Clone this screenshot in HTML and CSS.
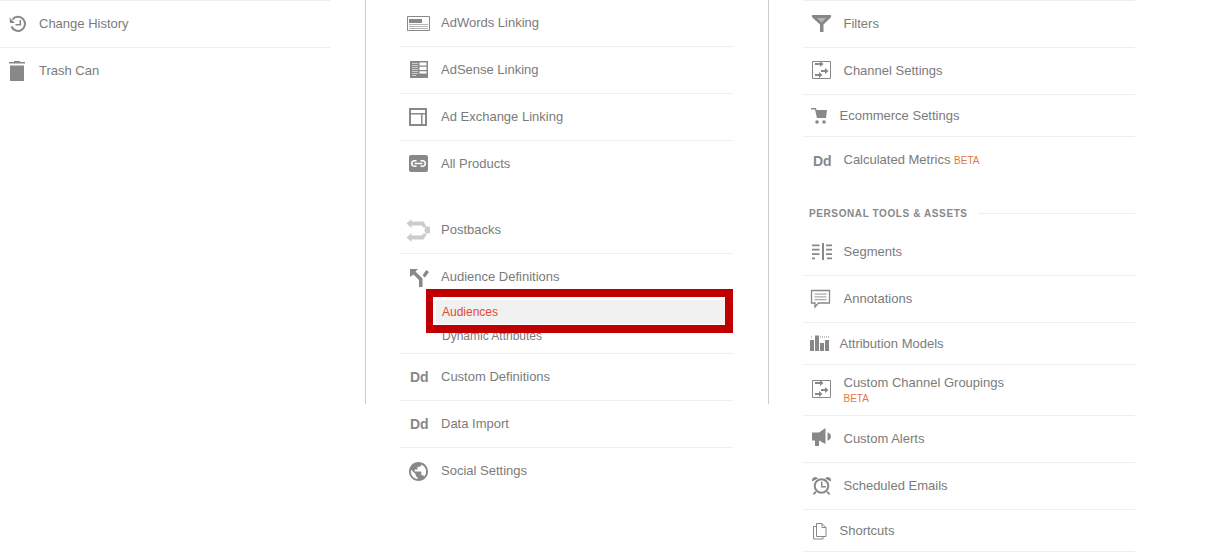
FILE: index.html
```html
<!DOCTYPE html>
<html lang="en">
<head>
<meta charset="utf-8">
<title>Admin</title>
<link rel="stylesheet" href="styles.css">
</head>
<body>
<div class="page">
  <ul class="col col-a topline">
    <li class="row"><span class="ico"><svg viewBox="0 0 24 24"><path class="line thick" d="M6.500 7.500A7 7 0 1 1 5.500 14.500"/><path d="M3.500 5.500l5.500 5.500H4zM13.500 8h1.600v5.500H9.500v-1.600h4z"/></svg></span>Change History</li>
    <li class="row last"><span class="ico"><svg viewBox="0 0 24 24"><path d="M8 2h6v1h5v1.600H3V3h5zM4 6.500h14V22H4z"/></svg></span>Trash Can</li>
  </ul>
  <div class="divider"></div>
  <div class="col col-b">
    <ul>
      <li class="row"><span class="ico"><svg viewBox="0 0 24 24"><path class="line" d="M1.500 5.500h22v14h-22z"/><path d="M3 8h13v4H3z"/><path class="soft" d="M3 13h19v1H3zM3 15h19v1H3zM3 17h19v1H3z"/></svg></span>AdWords Linking</li>
      <li class="row"><span class="ico"><svg viewBox="0 0 24 24"><path d="M4 3h18v17H4z"/><path class="stripe" d="M6 5h6v1H6zM6 7h6v1H6zM6 9h6v1H6zM6 11h6v1H6zM6 13h6v1H6zM6 15h6v1H6zM6 17h4v1H6z"/><path class="cut" d="M13.500 4.500H20.500V7.500H13.500zM13.500 8.800H20.500V12H13.500zM13.500 13.300H20.500V15.500H13.500z"/></svg></span>AdSense Linking</li>
      <li class="row"><span class="ico"><svg viewBox="0 0 24 24"><path d="M3 3h18v18H3zm2 2v3h14V5zm0 4.500V19h10V9.500zm11.500 0V19H19V9.500z" fill-rule="evenodd"/></svg></span>Ad Exchange Linking</li>
      <li class="row last"><span class="ico"><svg viewBox="0 0 24 24"><rect x="3" y="3" width="19" height="17" rx="2"/><path class="link" d="M10.500 8.700H8.500a2.800 2.800 0 0 0 0 5.600h2M14.500 8.700h2a2.800 2.800 0 0 1 0 5.600h-2M8.500 11.500h8"/></svg></span>All Products</li>
    </ul>
    <ul class="group">
      <li class="row"><span class="ico"><svg viewBox="0 0 24 24" class="pale"><path d="M.5 5.500L5.500 1v2.500h12l3.500 6h-3.500l-2-2H5.500V10zM.5 19.500L5.500 15v2.500h10l2-2H21l-3.500 6h-12V24z"/><circle cx="22" cy="12" r="3.500"/></svg></span>Postbacks</li>
      <li class="row row-parent"><span class="ico"><svg viewBox="0 0 24 24"><path d="M4 4h8l-2.500 2.500 7 7V22h-3.500v-7L7.500 9.500 4 12zM16.500 10.500l3.700-5.500 2.800 2-4 5.600z"/></svg></span>Audience Definitions
        <ul class="sub">
          <li class="sub-item active">Audiences<span class="callout"></span></li>
          <li class="sub-item">Dynamic Attributes</li>
        </ul>
      </li>
      <li class="row"><span class="ico dd">Dd</span>Custom Definitions</li>
      <li class="row"><span class="ico dd">Dd</span>Data Import</li>
      <li class="row last"><span class="ico"><svg viewBox="0 0 24 24"><path transform="translate(1.100 1.100) scale(.95)" d="M12 2C6.480 2 2 6.480 2 12s4.480 10 10 10 10-4.480 10-10S17.520 2 12 2zm-1 17.930c-3.950-.490-7-3.850-7-7.930 0-.620.080-1.210.210-1.790L9 15v1c0 1.100.9 2 2 2v1.930zm6.900-2.540c-.260-.810-1-1.390-1.900-1.390h-1v-3c0-.550-.450-1-1-1H8v-2h2c.550 0 1-.450 1-1V7h2c1.100 0 2-.9 2-2v-.410c2.930 1.190 5 4.060 5 7.410 0 2.080-.8 3.970-2.100 5.390z"/></svg></span>Social Settings</li>
    </ul>
  </div>
  <div class="divider"></div>
  <div class="col col-c">
    <ul class="topline">
      <li class="row"><span class="ico"><svg viewBox="0 0 24 24"><path d="M2 3h19v2.200l-7.500 7.300V20H10v-7.500L2 5.200z"/><path class="soft" d="M7 6h9l-4.500 4.500z"/></svg></span>Filters</li>
      <li class="row"><span class="ico"><svg viewBox="0 0 24 24"><path class="line" d="M2.500 2.500h18v17h-18z"/><path d="M5 4h5V2l3.500 3-3.500 3V6H5zM11 11h4V9l3.500 3-3.500 3v-2h-4zM5 15h4v-2l3.500 3L9 19v-2H5z"/></svg></span>Channel Settings</li>
      <li class="row short"><span class="ico"><svg viewBox="0 0 24 24"><path d="M3 4h5l.5 2H19l-1 8H9L7 5.500H3z"/><circle cx="9" cy="18" r="1.800"/><circle cx="16" cy="18" r="1.800"/></svg></span>Ecommerce Settings</li>
      <li class="row last"><span class="ico dd">Dd</span><span>Calculated Metrics <span class="beta">BETA</span></span></li>
    </ul>
    <div class="heading"><span>PERSONAL TOOLS &amp; ASSETS</span></div>
    <ul>
      <li class="row"><span class="ico"><svg viewBox="0 0 24 24"><path d="M12 3h2v17h-2zM2 4.500h7.500v1.800H2zM2 8.800h7.500v1.800H2zM2 13.200h7.500V15H2zM2 17.500h3v1.800H2zM16 4.500h6v1.800h-6zM16 8.800h6v1.800h-6zM16 13.200h6V15h-6zM17 17.500h5v1.800h-5z"/></svg></span>Segments</li>
      <li class="row"><span class="ico"><svg viewBox="0 0 24 24"><path class="line mid-stroke" d="M1.500 3.500h18v12.500H8.500L5 20v-4H1.500z"/><path class="mid" d="M4.500 6.500h12v1.200h-12zM4.500 9.300h12v1.200h-12zM4.500 12.100h12v1.200h-12z"/></svg></span>Annotations</li>
      <li class="row short"><span class="ico"><svg viewBox="0 0 24 24"><path d="M2 8h4v11H2zM7 3.500h4V19H7zM12 11h4v8h-4zM17 8h4v11h-4zM3 4.500h1v1H3zM12 4.500h1v1h-1zM14 4.500h1v1h-1zM16 4.500h1v1h-1zM18 4.500h1v1h-1zM20 4.500h1v1h-1z"/></svg></span>Attribution Models</li>
      <li class="row double"><span class="ico"><svg viewBox="0 0 24 24"><path class="line" d="M2.500 2.500h18v17h-18z"/><path d="M5 4h5V2l3.500 3-3.500 3V6H5zM11 11h4V9l3.500 3-3.500 3v-2h-4zM5 15h4v-2l3.500 3L9 19v-2H5z"/></svg></span><span class="stack">Custom Channel Groupings<span class="beta">BETA</span></span></li>
      <li class="row"><span class="ico"><svg viewBox="0 0 24 24"><path d="M2 5.500h7L15.500 1v16L9 13.500v5.500H5v-5.500H2zM17.500 5.500c2.300.5 3.500 2.200 3.500 4s-1.200 3.500-3.500 4z"/></svg></span>Custom Alerts</li>
      <li class="row"><span class="ico"><svg viewBox="0 0 24 24"><circle class="line thick" cx="11.500" cy="12" r="6.800"/><path d="M11 7.500h1.500V12H16v1.500h-5zM2 7.500C1.500 4.500 3 3 6 3l2 1.500zM21 7.500C21.500 4.500 20 3 17 3l-2 1.500zM5 17l1.500 1.500L4.800 20.500H2.500zM18 17l-1.500 1.500 1.700 2h2.300z"/></svg></span>Scheduled Emails</li>
      <li class="row short"><span class="ico"><svg viewBox="0 0 24 24"><path class="line" d="M8.500 4.500h5.500l4 4v9H8.500zM14 4.500v4h4M8.500 7.500h-3v12.500h9.500v-2.500"/></svg></span>Shortcuts</li>
    </ul>
  </div>
</div>
</body>
</html>
```
FILE: styles.css
```css
* { box-sizing: border-box; }
html, body { margin: 0; padding: 0; }
body {
  background: #fff;
  color: #7b7b7b;
  font-family: "Liberation Sans", Arial, sans-serif;
  font-size: 13px;
  height: 560px;
  overflow: hidden;
}
ul { list-style: none; margin: 0; padding: 0; }
.page { display: flex; align-items: flex-start; }
.col-a { width: 330px; }
.col-b { width: 333px; }
.col-c { width: 332px; }
.divider {
  width: 1px;
  height: 404px;
  margin: 0 34px 0 35px;
  background: #ccc;
}
.topline { border-top: 1px solid #eee; }
.row {
  display: flex;
  align-items: center;
  height: 47px;
  border-bottom: 1px solid #eee;
  flex-wrap: wrap;
  align-content: flex-start;
  padding-top: 15px;
  line-height: 16px;
}
.last { border-bottom: 0; }
.ico {
  width: 41px;
  height: 16px;
  padding-left: 6px;
  flex: none;
  display: flex;
  align-items: center;
}
.col-a .ico { width: 39px; }
.col-c .ico { width: 40.5px; padding-left: 7px; }
.ico svg { width: 24px; height: 24px; flex: none; fill: #888; }
.ico .line { fill: none; stroke: #888; stroke-width: 1; }
.ico .thick { stroke-width: 2; }
.ico .mid-stroke { stroke-width: 1.300; }
.ico .cut { fill: #fff; }
.ico .soft { fill: #b5b5b5; }
.ico .mid { fill: #aaa; }
.ico .stripe { fill: #ccc; }
.ico .link { fill: none; stroke: #fff; stroke-width: 1.600; }
.ico .pale { fill: #ccc; }
.ico.dd {
  font-weight: bold;
  font-size: 14px;
  color: #888;
  padding-left: 10px;
}
.short { height: 42px; padding-top: 13px; }
.col-c .short .ico { width: 36.5px; padding-left: 5px; }
.double { height: 51px; padding-top: 10px; }
.double .ico { align-self: flex-start; margin-top: 7px; }
.stack { display: flex; flex-direction: column; }
.beta { color: #dd7a3c; font-size: 10px; }
.group { margin-top: 19px; }
.row-parent { height: 100px; }
.sub { width: 100%; padding-left: 36px; margin-top: 15px; font-size: 12px; }
.sub-item { height: 24px; line-height: 24px; padding-left: 6px; }
.active { position: relative; background: #f1f1f1; color: #dd4b39; }
.callout {
  position: absolute;
  left: -10px;
  right: 0;
  top: -11px;
  height: 44px;
  border: 8px solid #c00000;
  border-left-width: 7px;
}
.heading {
  display: flex;
  align-items: center;
  margin: 21px 0 8px;
  height: 16px;
  padding-left: 6px;
  font-size: 10px;
  font-weight: bold;
  letter-spacing: 0.6px;
  color: #888;
}
.heading span { padding-right: 10px; white-space: nowrap; }
.heading::after { content: ""; flex: 1; height: 1px; background: #eee; }
```
